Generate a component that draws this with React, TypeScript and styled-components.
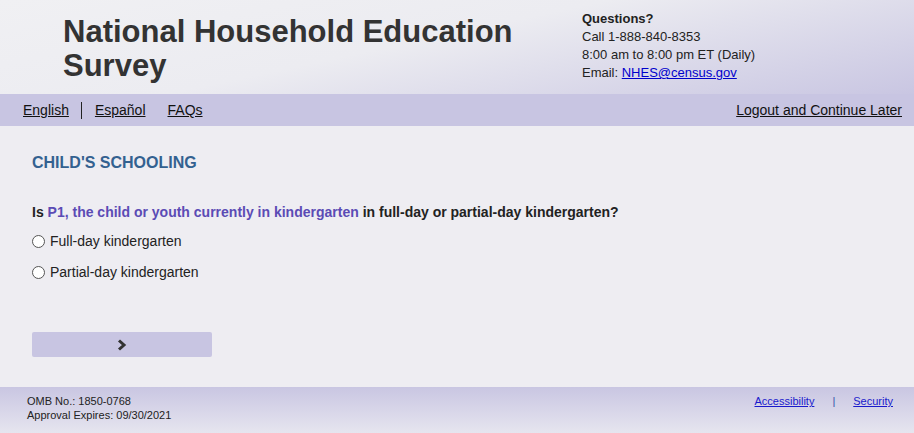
import styled, { createGlobalStyle } from 'styled-components'

const GlobalStyle = createGlobalStyle`
  html, body {
    margin: 0;
    padding: 0;
    background: #eeedf2;
    font-family: 'Liberation Sans', Arial, sans-serif;
    color: #222;
  }
`

const Page = styled.div`
  width: 914px;
  height: 433px;
  display: flex;
  flex-direction: column;
  overflow: hidden;
`

const Header = styled.header`
  height: 94px;
  display: flex;
  justify-content: space-between;
  background: linear-gradient(168deg, #f0f0f3 0%, #ececf1 45%, #c9c6e2 100%);
`

const Title = styled.h1`
  margin: 0;
  padding: 15px 0 0 63px;
  font-size: 31px;
  line-height: 34px;
  font-weight: bold;
  color: #333;
  width: 470px;
`

const Contact = styled.div`
  width: 332px;
  padding-top: 10px;
  font-size: 13px;
  line-height: 18px;
  color: #222;
`

const Bold = styled.div`
  font-weight: bold;
`

const MailLink = styled.a`
  color: #0000cc;
  text-decoration: underline;
`

const NavBar = styled.nav`
  height: 32px;
  background: #c8c5e2;
  display: flex;
  align-items: center;
  justify-content: space-between;
  padding: 0 12px 0 23px;
  font-size: 14px;
`

const NavGroup = styled.div`
  display: flex;
  align-items: center;
`

const NavLink = styled.a<{ gap?: number }>`
  color: #111;
  text-decoration: underline;
  margin-right: ${({ gap }) => gap ?? 0}px;
`

const Divider = styled.span`
  width: 1px;
  height: 17px;
  background: #222;
  margin: 0 13px 0 12px;
`

const Main = styled.main`
  flex: 1;
  padding: 27px 32px 0;
`

const Section = styled.h2`
  margin: 0;
  font-size: 16px;
  line-height: 20px;
  color: #336190;
  font-weight: bold;
`

const Question = styled.p`
  margin: 30px 0 0;
  font-size: 14px;
  line-height: 18px;
  font-weight: bold;
  color: #222;
`

const Who = styled.span`
  color: #5b4bb5;
`

const Options = styled.div`
  margin-top: 11px;
  display: flex;
  flex-direction: column;
  gap: 13px;
`

const Option = styled.label`
  display: flex;
  align-items: center;
  font-size: 14px;
  line-height: 18px;
  color: #222;
`

const Radio = styled.span`
  width: 11px;
  height: 11px;
  border: 1px solid #555;
  border-radius: 50%;
  background: #fff;
  margin-right: 5px;
`

const NextButton = styled.button`
  margin-top: 51px;
  width: 180px;
  height: 25px;
  border: none;
  border-radius: 2px;
  background: #c8c5e2;
  display: flex;
  align-items: center;
  justify-content: center;
  padding: 0;
`

const Footer = styled.footer`
  height: 46px;
  background: linear-gradient(180deg, #c9c6e2 0%, #e6e5ef 100%);
  display: flex;
  justify-content: space-between;
  padding: 7px 21px 0 27px;
  box-sizing: border-box;
  font-size: 11px;
  line-height: 14px;
  color: #222;
`

const FooterLinks = styled.div`
  display: flex;
  align-items: flex-start;
  font-size: 11px;
`

const FooterLink = styled.a`
  color: #1a1acc;
  text-decoration: underline;
`

const Pipe = styled.span`
  color: #3355aa;
  margin: 0 18px;
`

export default function App() {
  return (
    <>
      <GlobalStyle />
      <Page>
        <Header>
          <Title>National Household Education Survey</Title>
          <Contact>
            <Bold>Questions?</Bold>
            <div>Call 1-888-840-8353</div>
            <div>8:00 am to 8:00 pm ET (Daily)</div>
            <div>
              Email: <MailLink href="#">NHES@census.gov</MailLink>
            </div>
          </Contact>
        </Header>
        <NavBar>
          <NavGroup>
            <NavLink href="#">English</NavLink>
            <Divider />
            <NavLink href="#" gap={22}>Español</NavLink>
            <NavLink href="#">FAQs</NavLink>
          </NavGroup>
          <NavLink href="#">Logout and Continue Later</NavLink>
        </NavBar>
        <Main>
          <Section>CHILD'S SCHOOLING</Section>
          <Question>
            Is <Who>P1, the child or youth currently in kindergarten</Who> in full-day or
            partial-day kindergarten?
          </Question>
          <Options>
            <Option>
              <Radio />
              Full-day kindergarten
            </Option>
            <Option>
              <Radio />
              Partial-day kindergarten
            </Option>
          </Options>
          <NextButton aria-label="Next">
            <svg width="10" height="12" viewBox="0 0 10 12">
              <path d="M2 1.5 L7 6 L2 10.5" stroke="#333" strokeWidth="3" fill="none" />
            </svg>
          </NextButton>
        </Main>
        <Footer>
          <div>
            <div>OMB No.: 1850-0768</div>
            <div>Approval Expires: 09/30/2021</div>
          </div>
          <FooterLinks>
            <FooterLink href="#">Accessibility</FooterLink>
            <Pipe>|</Pipe>
            <FooterLink href="#">Security</FooterLink>
          </FooterLinks>
        </Footer>
      </Page>
    </>
  )
}
